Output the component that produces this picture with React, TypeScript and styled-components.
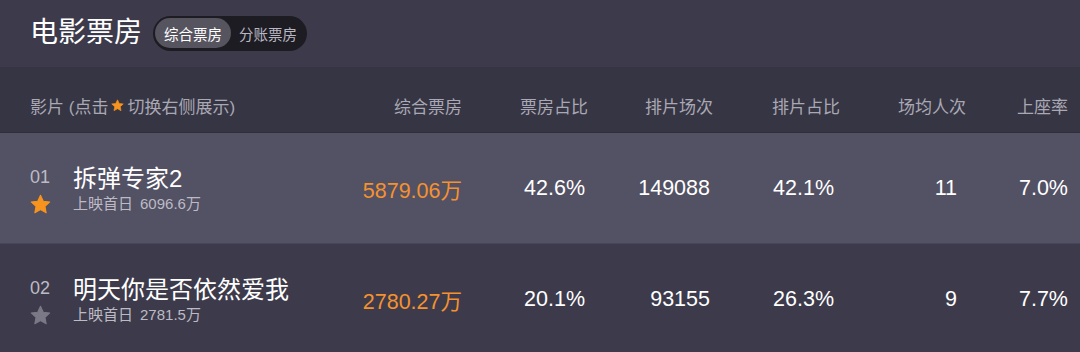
import React from 'react';
import styled, { createGlobalStyle } from 'styled-components';

const GlobalStyle = createGlobalStyle`
  body {
    margin: 0;
    background: #3d3b4b;
    font-family: "Liberation Sans", "Noto Sans CJK SC", sans-serif;
  }
`;

const Page = styled.div`
  width: 1080px;
  height: 352px;
  overflow: hidden;
  background: #3d3b4b;
  color: #fff;
`;

const TitleBar = styled.div`
  height: 67px;
  display: flex;
  align-items: center;
  padding: 0 0 1px 30px;
  box-sizing: border-box;
  gap: 11px;
`;

const Title = styled.h1`
  margin: 0;
  font-size: 28px;
  font-weight: 400;
  color: #fff;
  line-height: 1;
`;

const Toggle = styled.div`
  display: flex;
  align-items: center;
  height: 35px;
  padding: 0 2px 0 2px;
  box-sizing: border-box;
  border-radius: 18px;
  background: #1d1c23;
`;

const ToggleItem = styled.div<{ active?: boolean }>`
  height: 30px;
  display: flex;
  align-items: center;
  padding: ${({ active }) => (active ? '0 9px' : '0 8px 0 8px')};
  border-radius: 15px;
  font-size: 14.5px;
  color: ${({ active }) => (active ? '#ffffff' : '#b9b8c2')};
  background: ${({ active }) => (active ? '#56545f' : 'transparent')};
`;

const columns = '1fr 120px 126px 125px 127px 126px 102px';

const HeaderRow = styled.div`
  display: grid;
  grid-template-columns: ${columns};
  align-items: center;
  height: 66px;
  padding: 12px 12px 0 30px;
  box-sizing: border-box;
  background: #363543;
  border-bottom: 1px solid #2f2e3a;
  font-size: 17px;
  color: #a9a8b4;
`;

const HeaderCell = styled.div<{ align?: 'left' | 'right' }>`
  white-space: nowrap;
  display: flex;
  align-items: center;
  justify-content: ${({ align }) => (align === 'left' ? 'flex-start' : 'flex-end')};
  gap: 3px;
`;

const DataRow = styled.div<{ highlight?: boolean }>`
  display: grid;
  grid-template-columns: ${columns};
  align-items: center;
  height: 111px;
  padding: 0 12px 0 30px;
  box-sizing: border-box;
  background: ${({ highlight }) => (highlight ? '#535164' : '#3d3b4b')};
  border-bottom: 1px solid #47455a;
`;

const FilmCell = styled.div`
  display: flex;
  align-items: flex-start;
  padding-top: 4px;
`;

const RankCol = styled.div`
  width: 43px;
  display: flex;
  flex-direction: column;
  align-items: flex-start;
  gap: 7px;
  padding-top: 2px;
`;

const Rank = styled.div`
  font-size: 18px;
  line-height: 20px;
  color: #bcbbc5;
`;

const NameCol = styled.div`
  display: flex;
  flex-direction: column;
  gap: 2px;
`;

const FilmName = styled.div`
  font-size: 24px;
  line-height: 28px;
  color: #fff;
`;

const FirstDay = styled.div`
  font-size: 15px;
  line-height: 18px;
  color: #bcbbc5;
  display: flex;
  gap: 7px;
`;

const Value = styled.div<{ orange?: boolean; pad?: number }>`
  text-align: right;
  font-size: 21.5px;
  padding-right: ${({ pad }) => pad ?? 0}px;
  color: ${({ orange }) => (orange ? '#f5922f' : '#ffffff')};
  white-space: nowrap;
`;

const Star = ({ size, color }: { size: number; color: string }) => (
  <svg width={size} height={size} viewBox="0 0 24 24">
    <polygon
      points="12,1.5 15.2,8.2 22.6,9.1 17.1,14.2 18.5,21.5 12,17.9 5.5,21.5 6.9,14.2 1.4,9.1 8.8,8.2"
      fill={color}
      stroke={color}
      strokeWidth={1.2}
      strokeLinejoin="round"
    />
  </svg>
);

interface Film {
  rank: string;
  name: string;
  firstDay: string;
  total: string;
  boxShare: string;
  shows: string;
  showShare: string;
  avgPeople: string;
  seatRate: string;
  starred: boolean;
}

const films: Film[] = [
  {
    rank: '01',
    name: '拆弹专家2',
    firstDay: '6096.6万',
    total: '5879.06万',
    boxShare: '42.6%',
    shows: '149088',
    showShare: '42.1%',
    avgPeople: '11',
    seatRate: '7.0%',
    starred: true,
  },
  {
    rank: '02',
    name: '明天你是否依然爱我',
    firstDay: '2781.5万',
    total: '2780.27万',
    boxShare: '20.1%',
    shows: '93155',
    showShare: '26.3%',
    avgPeople: '9',
    seatRate: '7.7%',
    starred: false,
  },
];

const App: React.FC = () => (
  <Page>
    <GlobalStyle />
    <TitleBar>
      <Title>电影票房</Title>
      <Toggle>
        <ToggleItem active>综合票房</ToggleItem>
        <ToggleItem>分账票房</ToggleItem>
      </Toggle>
    </TitleBar>
    <HeaderRow>
      <HeaderCell align="left">
        影片 (点击 <Star size={13} color="#f7941d" /> 切换右侧展示)
      </HeaderCell>
      <HeaderCell>综合票房</HeaderCell>
      <HeaderCell>票房占比</HeaderCell>
      <HeaderCell>排片场次</HeaderCell>
      <HeaderCell>排片占比</HeaderCell>
      <HeaderCell>场均人次</HeaderCell>
      <HeaderCell>上座率</HeaderCell>
    </HeaderRow>
    {films.map((film) => (
      <DataRow key={film.rank} highlight={film.starred}>
        <FilmCell>
          <RankCol>
            <Rank>{film.rank}</Rank>
            <Star size={21} color={film.starred ? '#f7941d' : '#7b7988'} />
          </RankCol>
          <NameCol>
            <FilmName>{film.name}</FilmName>
            <FirstDay>
              <span>上映首日</span>
              <span>{film.firstDay}</span>
            </FirstDay>
          </NameCol>
        </FilmCell>
        <Value orange>{film.total}</Value>
        <Value pad={3}>{film.boxShare}</Value>
        <Value pad={3}>{film.shows}</Value>
        <Value pad={6}>{film.showShare}</Value>
        <Value pad={9}>{film.avgPeople}</Value>
        <Value>{film.seatRate}</Value>
      </DataRow>
    ))}
  </Page>
);

export default App;
